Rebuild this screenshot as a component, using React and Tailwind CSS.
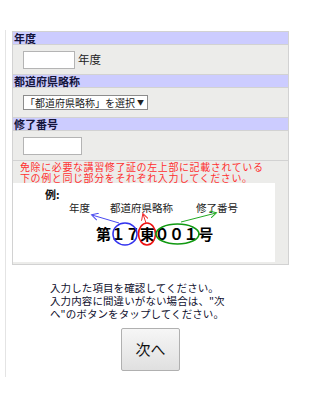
import React from "react";

const font = { fontFamily: '"Noto Sans CJK JP", "Noto Sans", sans-serif' };

function Header({ children }) {
  return (
    <div className="h-[13px] bg-[#ccccff] border-b border-[#d2d2d2] text-[11px] leading-[12px] font-bold text-[#14143c] pl-[1px]">
      {children}
    </div>
  );
}

function Row({ children }) {
  return (
    <div className="h-[30px] bg-[#ececea] border-b border-[#d2d2d2] flex items-center pl-[10px]">
      {children}
    </div>
  );
}

function Example() {
  const xs = [83, 97.6, 112.2, 126.8, 141.4, 156, 170.6, 185.2];
  const chars = ["第", "１", "７", "東", "０", "０", "１", "号"];
  return (
    <svg width="262" height="79" viewBox="0 0 262 79" style={font}>
      <defs>
        <marker id="ab" markerWidth="8" markerHeight="8" refX="6" refY="4" orient="auto" markerUnits="userSpaceOnUse">
          <path d="M0,0.5 L6.5,4 L0,7.5" fill="none" stroke="#4a4af0" strokeWidth="1" />
        </marker>
        <marker id="ar" markerWidth="8" markerHeight="8" refX="6" refY="4" orient="auto" markerUnits="userSpaceOnUse">
          <path d="M0,0.5 L6.5,4 L0,7.5" fill="none" stroke="#f03030" strokeWidth="1" />
        </marker>
        <marker id="ag" markerWidth="8" markerHeight="8" refX="6" refY="4" orient="auto" markerUnits="userSpaceOnUse">
          <path d="M0,0.5 L6.5,4 L0,7.5" fill="none" stroke="#22aa22" strokeWidth="1" />
        </marker>
      </defs>
      <text x="32" y="16" fontSize="11" fontWeight="bold" fill="#111">例:</text>
      <text x="56" y="29" fontSize="10.5" fill="#222">年度</text>
      <text x="97" y="29" fontSize="10.5" fill="#222">都道府県略称</text>
      <text x="183" y="29" fontSize="10.5" fill="#222">修了番号</text>
      {chars.map((c, i) => (
        <text key={i} x={xs[i]} y="57" fontSize="15" fontWeight="bold" fill="#000">{c}</text>
      ))}
      <ellipse cx="112" cy="51" rx="12" ry="11" fill="none" stroke="#3333ee" strokeWidth="1.6" />
      <ellipse cx="134" cy="51" rx="8.5" ry="11" fill="none" stroke="#ee1111" strokeWidth="1.6" />
      <ellipse cx="164.5" cy="51" rx="21.5" ry="10" fill="none" stroke="#119911" strokeWidth="1.6" />
      <line x1="106" y1="40" x2="79" y2="32" stroke="#4a4af0" strokeWidth="1" markerEnd="url(#ab)" />
      <line x1="133" y1="40" x2="130" y2="31" stroke="#f03030" strokeWidth="1" markerEnd="url(#ar)" />
      <line x1="168" y1="39" x2="203" y2="30" stroke="#22aa22" strokeWidth="1" markerEnd="url(#ag)" />
    </svg>
  );
}

export default function App() {
  return (
    <div className="w-[300px] h-[410px] bg-white overflow-hidden" style={font}>
      <div className="pt-[30px] pl-[5px]">
        <div className="h-[347px] border-l border-[#e4e4e4] pl-[6px] pt-[1px]">
          <div className="w-[277px] border border-[#d2d2d2] bg-[#ececea]">
            <Header>年度</Header>
            <Row>
              <div className="w-[52px] h-[18px] bg-white border border-[#b4b4b4]" />
              <span className="ml-[3px] text-[11.5px] text-[#222]">年度</span>
            </Row>
            <Header>都道府県略称</Header>
            <Row>
              <div className="w-[125px] h-[15px] bg-white border border-[#8c8c8c] flex items-center text-[10px] leading-[13px] text-[#222] whitespace-nowrap pl-[1px]">
                「都道府県略称」を選択<span className="text-[7px] ml-[2px]">▼</span>
              </div>
            </Row>
            <Header>修了番号</Header>
            <Row>
              <div className="w-[59px] h-[18px] bg-white border border-[#b4b4b4]" />
            </Row>
            <div className="pl-[7px] h-[22px] text-[10px] leading-[11px] tracking-[0.6px] text-[#ff2f2f] whitespace-nowrap">
              免除に必要な講習修了証の左上部に記載されている
              <br />
              下の例と同じ部分をそれぞれ入力してください。
            </div>
            <div className="pb-[2px]">
              <div className="w-[262px] h-[79px] bg-white">
                <Example />
              </div>
            </div>
          </div>
          <div className="pl-[38px] pt-[16px] text-[10.5px] leading-[13px] tracking-[0.1px] text-[#10102e] whitespace-nowrap">
            入力した項目を確認してください。
            <br />
            入力内容に間違いがない場合は、"次
            <br />
            へ"のボタンをタップしてください。
          </div>
          <div className="pl-[109px] pt-[8px]">
            <button className="w-[59px] h-[43px] border border-[#b0b0b0] rounded-[2px] bg-gradient-to-b from-[#f6f6f6] to-[#e0e0e0] text-[15px] text-[#111] flex items-center justify-center">
              次へ
            </button>
          </div>
        </div>
      </div>
    </div>
  );
}
